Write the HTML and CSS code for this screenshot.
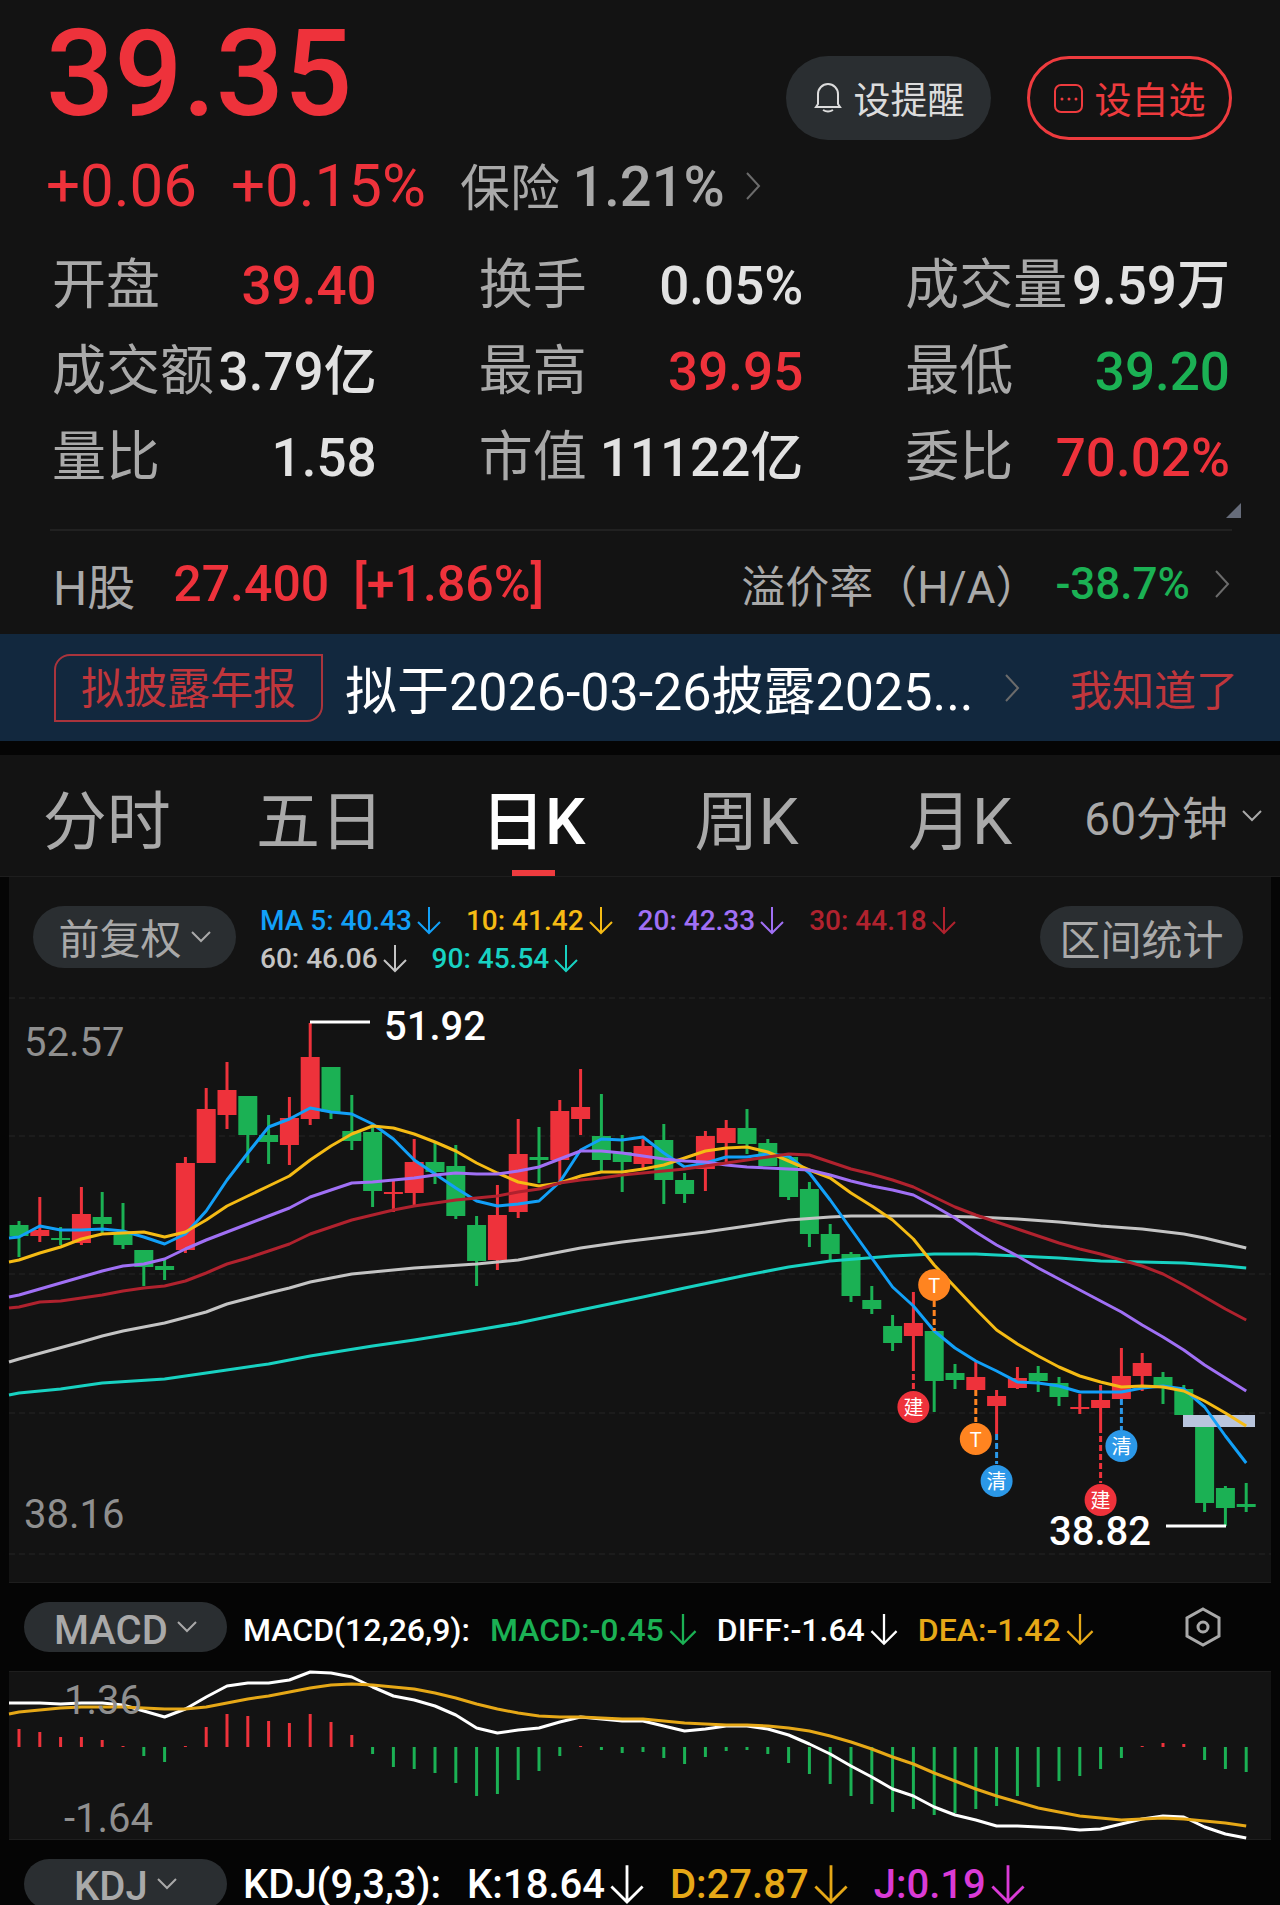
FILE: index.html
```html
<!DOCTYPE html>
<html lang="zh-CN">
<head>
    <meta charset="UTF-8">
    <meta name="viewport" content="width=device-width, initial-scale=1.0">
    <title>39.35</title>
    <link rel="stylesheet" href="styles.css">
</head>
<body>

    <!-- shared icons -->
    <svg class="sprite" aria-hidden="true">
        <symbol id="right" viewBox="0 0 16 30"><path d="M2 2l12 13L2 28"/></symbol>
        <symbol id="down" viewBox="0 0 20 12"><path d="M1 1l9 9 9-9"/></symbol>
        <symbol id="arrow" viewBox="0 0 24 28"><path d="M12 0v26M1 15l11 11 11-11"/></symbol>
    </svg>

    <header class="quote">
        <div class="quote-top">
            <div class="price">39.35</div>
            <div class="actions">
                <button type="button" class="action">
                    <svg class="action-icon" viewBox="0 0 30 32"><path d="M3 25h24l-2-3V12a10 10 0 0 0-20 0v10zM10 28q5 3 10 0"/></svg>
                    设提醒
                </button>
                <button type="button" class="action action-red">
                    <svg class="action-icon" viewBox="0 0 30 32"><rect x="1" y="3" width="27" height="27" rx="6"/><path class="dots" d="M8 17h0M15 17h0M22 17h0"/></svg>
                    设自选
                </button>
            </div>
        </div>

        <div class="change">
            <span class="red">+0.06</span>
            <span class="red">+0.15%</span>
            <a href="#" class="sector">保险 <b>1.21%</b></a>
            <svg class="chevron"><use href="#right"/></svg>
        </div>

        <dl class="stats">
            <div><dt>开盘</dt><dd class="red">39.40</dd></div>
            <div><dt>换手</dt><dd>0.05%</dd></div>
            <div><dt>成交量</dt><dd>9.59万</dd></div>
            <div><dt>成交额</dt><dd>3.79亿</dd></div>
            <div><dt>最高</dt><dd class="red">39.95</dd></div>
            <div><dt>最低</dt><dd class="green">39.20</dd></div>
            <div><dt>量比</dt><dd>1.58</dd></div>
            <div><dt>市值</dt><dd>11122亿</dd></div>
            <div><dt>委比</dt><dd class="red">70.02%</dd></div>
        </dl>
        <div class="corner"></div>

        <a href="#" class="hshare">
            <span>H股</span>
            <span class="red">27.400</span>
            <span class="red">[+1.86%]</span>
            <span class="premium">溢价率（H/A）</span>
            <span class="premium-value green">-38.7%</span>
            <svg class="chevron"><use href="#right"/></svg>
        </a>
    </header>

    <div class="notice">
        <span class="badge">拟披露年报</span>
        <a href="#" class="notice-text">拟于2026-03-26披露2025...</a>
        <svg class="chevron"><use href="#right"/></svg>
        <button type="button" class="dismiss">我知道了</button>
    </div>

    <nav class="tabs">
        <button type="button">分时</button>
        <button type="button">五日</button>
        <button type="button" class="active">日K</button>
        <button type="button">周K</button>
        <button type="button">月K</button>
        <label class="minutes">
            <select aria-label="60分钟"><option>60分钟</option></select>
            <svg class="caret"><use href="#down"/></svg>
        </label>
    </nav>

    <main class="charts">
        <section class="panel">
            <div class="ma-bar">
                <label class="pill">
                    <select aria-label="前复权"><option>前复权</option></select>
                    <svg class="caret"><use href="#down"/></svg>
                </label>
                <div class="ma-list">
                    <span class="ma5">MA 5: 40.43<svg><use href="#arrow"/></svg></span>
                    <span class="ma10">10: 41.42<svg><use href="#arrow"/></svg></span>
                    <span class="ma20">20: 42.33<svg><use href="#arrow"/></svg></span>
                    <span class="ma30">30: 44.18<svg><use href="#arrow"/></svg></span>
                    <span class="ma60">60: 46.06<svg><use href="#arrow"/></svg></span>
                    <span class="ma90">90: 45.54<svg><use href="#arrow"/></svg></span>
                </div>
                <button type="button" class="pill">区间统计</button>
            </div>
            <svg class="chart" id="kline" viewBox="0 0 1262 585"></svg>
        </section>

        <div class="indicator">
            <label class="pill">
                <select aria-label="MACD"><option>MACD</option></select>
                <svg class="caret"><use href="#down"/></svg>
            </label>
            <span>MACD(12,26,9):</span>
            <span class="green">MACD:-0.45<svg><use href="#arrow"/></svg></span>
            <span>DIFF:-1.64<svg><use href="#arrow"/></svg></span>
            <span class="gold">DEA:-1.42<svg><use href="#arrow"/></svg></span>
            <button type="button" class="settings" aria-label="MACD">
                <svg viewBox="0 0 36 40"><path d="M18 2l16 9v18l-16 9-16-9V11z"/><circle cx="18" cy="20" r="5"/></svg>
            </button>
        </div>

        <section class="panel">
            <svg class="chart" id="macd" viewBox="0 0 1262 167"></svg>
        </section>

        <div class="indicator kdj">
            <label class="pill">
                <select aria-label="KDJ"><option>KDJ</option></select>
                <svg class="caret"><use href="#down"/></svg>
            </label>
            <span>KDJ(9,3,3):</span>
            <span>K:18.64<svg><use href="#arrow"/></svg></span>
            <span class="gold">D:27.87<svg><use href="#arrow"/></svg></span>
            <span class="pink">J:0.19<svg><use href="#arrow"/></svg></span>
        </div>
    </main>

    <script src="chart.js"></script>
</body>
</html>
```
FILE: styles.css
```css
* {
    box-sizing: border-box;
}

body {
    margin: 0;
    background-color: #050505;
    color: #a9a9a9;
    font-family: Roboto, "Noto Sans CJK SC", sans-serif;
}

a {
    color: inherit;
    text-decoration: none;
}

button,
select {
    margin: 0;
    padding: 0;
    border: none;
    background: none;
    color: inherit;
    font: inherit;
    cursor: pointer;
}

select {
    padding-top: 6px;
    appearance: none;
}

svg {
    fill: none;
    stroke: currentColor;
    stroke-width: 2;
}

.sprite {
    display: none;
}

.red {
    color: #ee323b;
}

.green {
    color: #1bb154;
}

.gold {
    color: #e6a817;
}

.pink {
    color: #da3bd6;
}

.chevron {
    width: 16px;
    height: 30px;
    flex: none;
    color: #6b6b6b;
}

.caret {
    width: 20px;
    height: 12px;
    flex: none;
}

/* quote */
.quote {
    padding: 16px 48px 0 46px;
    background-color: #131313;
}

.quote-top {
    display: flex;
    justify-content: space-between;
    align-items: flex-end;
    height: 124px;
}

.price {
    align-self: flex-start;
    line-height: 116px;
    font-size: 120px;
    font-weight: 500;
    color: #ee323b;
}

.actions {
    display: flex;
    gap: 36px;
}

.action {
    display: flex;
    justify-content: center;
    align-items: center;
    gap: 11px;
    width: 205px;
    height: 84px;
    border-radius: 42px;
    background-color: #2a2e31;
    color: #dcdcdc;
    font-size: 37px;
}

.action-red {
    border: 3px solid #ee3b3e;
    background: none;
    color: #ee3b3e;
}

.action-icon {
    width: 30px;
    height: 32px;
}

.dots {
    stroke-width: 3;
    stroke-linecap: round;
}

.change {
    display: flex;
    align-items: center;
    gap: 34px;
    height: 60px;
    margin-top: 16px;
    line-height: 60px;
    font-size: 60px;
}

.sector {
    padding-top: 4px;
    font-size: 50px;
}

.sector b {
    font-size: 56px;
    font-weight: 500;
}

.change .chevron {
    margin-left: -14px;
}

.stats {
    display: grid;
    grid-template-columns: repeat(3, 1fr);
    column-gap: 102px;
    margin: 27px 2px 0 6px;
    line-height: 86px;
    font-size: 54px;
}

.stats div {
    display: flex;
    justify-content: space-between;
    height: 86px;
    white-space: nowrap;
}

.stats dd {
    margin: 0;
    font-size: 53px;
    font-weight: 500;
    color: #e2e2e2;
}

.stats dd.red {
    color: #ee323b;
}

.stats dd.green {
    color: #1bb154;
}

.corner {
    width: 15px;
    height: 15px;
    margin: 2px -9px 0 auto;
    background-color: #666c7a;
    clip-path: polygon(100% 0, 100% 100%, 0 100%);
}

.hshare {
    display: flex;
    align-items: center;
    height: 105px;
    margin: 11px 0 0 4px;
    padding: 2px 2px 0 3px;
    border-top: 2px solid #212121;
    gap: 38px;
    font-size: 48px;
    white-space: nowrap;
}

.hshare .red {
    font-size: 50px;
    font-weight: 500;
}

.hshare .red + .red {
    margin-left: -14px;
}

.hshare .premium {
    margin: 0 -22px 0 auto;
    font-size: 44px;
}

.hshare .premium-value {
    font-size: 44px;
    font-weight: 500;
}

.hshare .chevron {
    margin-left: -14px;
}

/* notice */
.notice {
    display: flex;
    align-items: center;
    height: 107px;
    padding: 0 42px 0 54px;
    background-color: #12283e;
    color: #c0363c;
    white-space: nowrap;
}

.badge {
    width: 269px;
    padding-top: 3px;
    border: 2px solid #a9343c;
    border-radius: 16px 0;
    line-height: 61px;
    font-size: 43px;
    text-align: center;
}

.notice-text {
    margin: 0 auto 0 22px;
    color: #fff;
    font-size: 52px;
}

.dismiss {
    margin-left: 50px;
    font-size: 42px;
}

/* period tabs */
.tabs {
    display: grid;
    grid-template-columns: repeat(6, 1fr);
    height: 122px;
    margin-top: 14px;
    border-bottom: 1px solid #1e1e1e;
    background-color: #131313;
    font-size: 64px;
}

.tabs .active {
    position: relative;
    color: #fff;
    font-weight: 500;
}

.tabs .active::after {
    content: "";
    position: absolute;
    left: 50%;
    bottom: 0;
    width: 43px;
    height: 6px;
    margin-left: -21px;
    background-color: #ee3b3e;
}

.minutes {
    display: flex;
    justify-content: center;
    align-items: center;
    gap: 14px;
    font-size: 46px;
}

/* charts */
.charts {
    padding: 0 9px;
}

.panel {
    border-bottom: 1px solid #1e1e1e;
    background-color: #131313;
}

.indicator + .panel {
    border-top: 1px solid #1e1e1e;
}

.chart {
    display: block;
    width: 100%;
    overflow: visible;
}

.pill {
    display: flex;
    justify-content: center;
    align-items: center;
    gap: 9px;
    flex: none;
    width: 203px;
    height: 62px;
    border-radius: 31px;
    background-color: #2a2e31;
    font-size: 41px;
}

.ma-bar {
    display: flex;
    align-items: flex-start;
    padding: 29px 28px 29px 24px;
}

.ma-list {
    display: flex;
    flex-wrap: wrap;
    column-gap: 25px;
    flex: 1;
    margin: -4px 60px -10px 24px;
    line-height: 38px;
    font-size: 28px;
    font-weight: 500;
}

.ma-list span,
.indicator span {
    display: flex;
    align-items: center;
    gap: 5px;
    white-space: nowrap;
}

.ma-list svg {
    width: 24px;
    height: 28px;
}

.ma5 { color: #12a0f8; }
.ma10 { color: #f5bb14; }
.ma20 { color: #a070f5; }
.ma30 { color: #b0222e; }
.ma60 { color: #c4c4c4; }
.ma90 { color: #18d2c2; }

.indicator {
    display: flex;
    align-items: center;
    gap: 20px;
    height: 88px;
    padding: 0 50px 0 15px;
    color: #fff;
    font-size: 32px;
    font-weight: 500;
}

.indicator > span {
    padding-top: 5px;
}

.indicator .pill {
    height: 50px;
    margin-right: -4px;
    border-radius: 25px;
    color: #a9a9a9;
    font-size: 40px;
}

.indicator span svg {
    width: 28px;
    height: 32px;
}

.settings {
    height: 40px;
    margin-left: auto;
    color: #a9a9a9;
}

.settings svg {
    width: 36px;
    height: 40px;
    stroke-width: 3;
}

.kdj {
    align-items: flex-start;
    gap: 26px;
    height: 65px;
    padding-top: 19px;
    overflow: hidden;
    line-height: 46px;
    font-size: 40px;
}

.kdj .pill {
    margin-right: -10px;
}

.kdj > span {
    padding-top: 3px;
}

.kdj span svg {
    width: 34px;
    height: 40px;
}

/* chart parts */
.chart text {
    fill: #8f8f8f;
    stroke: none;
    font-size: 40px;
}

.chart .peak {
    fill: #fff;
    font-weight: 500;
}

.grid {
    stroke: #1c1c1c;
    stroke-dasharray: 6 4;
}

.up {
    fill: #ee323b;
    stroke: #ee323b;
}

.fall {
    fill: #1bb154;
    stroke: #1bb154;
}

.bar,
.candle line {
    stroke-width: 3;
}

.candle rect,
.marker circle {
    stroke: none;
}

.line {
    stroke-width: 3;
    stroke-linejoin: round;
}

.leader {
    stroke: #fff;
    stroke-width: 3;
}

.gap {
    fill: #b9c5dd;
    stroke: none;
}

.marker line {
    stroke-width: 3;
    stroke-dasharray: 6 3;
}

.marker.jian { fill: #ee323b; stroke: #ee323b; }
.marker.t { fill: #ff8420; stroke: #ff8420; }
.marker.qing { fill: #2b98e8; stroke: #2b98e8; }

.chart .marker text {
    fill: #fff;
    font-size: 20px;
    text-anchor: middle;
}
```
FILE: chart.js
```js
const STEP = 20.8;
const FIRST = 10;

// [direction, high, top, bottom, low], measured down from the top of the chart
const candles = [
    ['g', 224, 228, 239, 260], ['r', 200, 233, 239, 245], ['g', 230, 241, 243, 248], ['r', 190, 217, 246, 248],
    ['g', 195, 220, 227, 237], ['g', 206, 236, 248, 252], ['g', 253, 253, 270, 289], ['g', 263, 269, 273, 283],
    ['r', 160, 166, 253, 256], ['r', 91, 112, 166, 166], ['r', 65, 93, 118, 132], ['g', 99, 99, 138, 166],
    ['g', 118, 138, 145, 167], ['r', 100, 121, 148, 168], ['r', 26, 60, 122, 128], ['g', 70, 70, 115, 122],
    ['g', 98, 134, 144, 153], ['g', 129, 135, 194, 210], ['r', 184, 195, 197, 215], ['r', 142, 165, 196, 209],
    ['g', 146, 165, 175, 187], ['g', 148, 169, 219, 222], ['g', 219, 228, 264, 289], ['r', 188, 218, 263, 273],
    ['r', 122, 157, 215, 221], ['g', 130, 160, 163, 186], ['r', 103, 114, 163, 185], ['r', 72, 110, 122, 138],
    ['g', 97, 139, 163, 175], ['g', 138, 155, 165, 195], ['r', 142, 149, 167, 171], ['g', 127, 143, 183, 207],
    ['g', 176, 183, 197, 206], ['r', 134, 139, 172, 194], ['r', 123, 131, 146, 166], ['g', 112, 131, 147, 157],
    ['g', 142, 146, 169, 169], ['g', 159, 160, 200, 203], ['g', 185, 192, 237, 250], ['g', 227, 237, 257, 264],
    ['g', 255, 257, 299, 305], ['g', 289, 303, 312, 317], ['g', 318, 329, 346, 354], ['r', 295, 326, 339, 368],
    ['g', 334, 334, 384, 415], ['g', 367, 376, 383, 392], ['r', 365, 380, 393, 393], ['r', 393, 399, 409, 437],
    ['r', 370, 381, 391, 392], ['g', 369, 376, 384, 395], ['g', 380, 386, 400, 409], ['r', 397, 410, 412, 417],
    ['r', 388, 403, 411, 430], ['r', 351, 379, 402, 402], ['r', 356, 366, 379, 394], ['g', 375, 380, 390, 407],
    ['g', 388, 392, 418, 418], ['g', 419, 429, 506, 515], ['g', 489, 491, 511, 529], ['g', 486, 507, 510, 515]
];

const ma5 = [240, 229, 233, 233, 232, 234, 240, 247, 237, 214, 183, 156, 130, 122, 111, 115, 117, 127, 142, 163,
    177, 191, 204, 209, 207, 204, 185, 153, 142, 143, 140, 156, 170, 166, 160, 160, 157, 159, 176, 203,
    232, 261, 290, 309, 334, 351, 364, 374, 385, 386, 389, 395, 395, 395, 391, 389, 392, 410, 439, 466];
const ma10 = [263, 256, 250, 242, 237, 236, 235, 240, 235, 223, 209, 199, 189, 179, 163, 149, 137, 129, 131, 137,
    145, 154, 166, 176, 185, 189, 186, 179, 175, 175, 172, 168, 161, 154, 151, 150, 155, 164, 173, 181,
    196, 209, 223, 242, 268, 290, 312, 333, 347, 359, 370, 379, 385, 390, 389, 390, 394, 404, 416, 429];
const ma20 = [298, 292, 286, 280, 274, 269, 267, 262, 252, 243, 235, 227, 219, 211, 200, 193, 186, 185, 183, 181,
    178, 176, 177, 177, 174, 170, 162, 154, 154, 156, 159, 162, 164, 165, 168, 170, 171, 172, 173, 178,
    184, 189, 193, 198, 209, 221, 235, 248, 259, 271, 282, 293, 304, 315, 328, 340, 353, 368, 381, 394];
const ma30 = [310, 305, 304, 301, 298, 294, 291, 289, 284, 276, 267, 261, 254, 247, 237, 230, 223, 218, 213, 209,
    206, 203, 201, 199, 195, 192, 186, 183, 181, 178, 176, 174, 172, 169, 166, 163, 160, 157, 158, 165,
    172, 177, 183, 190, 200, 210, 218, 225, 232, 239, 246, 252, 257, 263, 269, 277, 288, 300, 312, 323];

// the slow averages are given as [candle, y] points
const ma60 = [[0, 362], [3, 345], [4, 339], [5, 334], [7, 326], [9, 315], [10, 307], [12, 296], [13, 291],
    [14, 285], [15, 281], [16, 277], [17, 275], [19, 271], [22, 267], [23, 265], [24, 263], [25, 259], [27, 251],
    [29, 245], [31, 240], [33, 235], [35, 229], [37, 223], [39, 220], [40, 219], [44, 219], [46, 220], [48, 222],
    [50, 225], [52, 229], [54, 232], [56, 237], [57, 241], [58, 246], [59, 251]];
const ma90 = [[0, 396], [2, 392], [4, 386], [7, 382], [9, 376], [12, 367], [14, 359], [17, 349], [19, 343],
    [22, 333], [24, 326], [27, 313], [30, 300], [32, 291], [35, 278], [37, 270], [39, 264], [42, 259], [44, 257],
    [46, 257], [48, 259], [50, 261], [52, 264], [54, 265], [56, 266], [58, 269], [59, 271]];

// [candle, label, class, centre y, line from, line to]
const markers = [
    [43, '建', 'jian', 410, 368, 394],
    [44, 'T', 't', 288, 304, 334],
    [46, 'T', 't', 442, 393, 425],
    [47, '清', 'qing', 484, 437, 467],
    [52, '建', 'jian', 503, 430, 486],
    [53, '清', 'qing', 449, 402, 433]
];

const ZERO = 75;
const bars = [57, 60, 65, 65, 68, 74, 84, 90, 74, 55, 42, 44, 49, 51, 42, 50, 63, 82, 95, 97,
    101, 111, 124, 122, 108, 99, 84, 74, 78, 81, 80, 86, 92, 85, 79, 78, 82, 91, 102, 112,
    124, 132, 140, 137, 143, 141, 137, 134, 124, 115, 109, 104, 97, 86, 74, 71, 72, 88, 97, 100];
const diff = [31, 31, 32, 31, 31, 33, 39, 45, 37, 25, 14, 11, 11, 8, 0, 1, 5, 15, 24, 28,
    34, 43, 56, 61, 58, 56, 50, 45, 47, 49, 49, 54, 59, 57, 54, 54, 57, 63, 72, 82,
    94, 105, 117, 124, 135, 143, 148, 154, 154, 155, 156, 158, 157, 152, 147, 144, 145, 155, 162, 166];
const dea = [40, 38, 36, 35, 35, 35, 36, 37, 37, 35, 31, 27, 24, 20, 16, 13, 12, 13, 15, 17,
    21, 26, 32, 37, 41, 44, 45, 45, 46, 47, 47, 49, 51, 52, 53, 53, 54, 56, 59, 64,
    70, 77, 85, 92, 101, 109, 117, 124, 130, 136, 140, 144, 146, 148, 147, 146, 147, 149, 151, 154];

function x(i) {
    return FIRST + i * STEP;
}

function line(name, values, start) {
    const points = values.map((v, i) => Array.isArray(v) ? x(v[0]) + ',' + v[1] : x(i) + ',' + v);
    return `<polyline class="line ${name}" stroke="currentColor" points="0,${start} ${points.join(' ')}"/>`;
}

function drawKline() {
    let out = '';
    for (const y of [1, 139, 277, 416, 557]) {
        out += `<line class="grid" x1="0" y1="${y}" x2="1262" y2="${y}"/>`;
    }
    candles.forEach(([dir, high, top, bottom, low], i) => {
        out += `<g class="candle ${dir === 'r' ? 'up' : 'fall'}">
            <line x1="${x(i)}" y1="${high}" x2="${x(i)}" y2="${low}"/>
            <rect x="${x(i) - 9.5}" y="${top}" width="19" height="${bottom - top}"/></g>`;
    });
    out += '<rect class="gap" x="1174" y="418" width="72" height="12"/>';
    out += line('ma60', ma60, 365) + line('ma90', ma90, 398) + line('ma5', ma5, 241);
    out += line('ma10', ma10, 265) + line('ma20', ma20, 300) + line('ma30', ma30, 311);
    for (const [i, label, name, cy, from, to] of markers) {
        out += `<g class="marker ${name}"><line x1="${x(i)}" y1="${from}" x2="${x(i)}" y2="${to}"/>
            <circle cx="${x(i)}" cy="${cy}" r="16"/><text x="${x(i)}" y="${cy + 8}">${label}</text></g>`;
    }
    out += '<line class="leader" x1="301" y1="25" x2="361" y2="25"/><text class="peak" x="375" y="43">51.92</text>';
    out += '<line class="leader" x1="1157" y1="529" x2="1217" y2="529"/><text class="peak" x="1040" y="548">38.82</text>';
    out += '<text x="15" y="59">52.57</text><text x="15" y="531">38.16</text>';
    document.getElementById('kline').innerHTML = out;
}

function drawMacd() {
    let out = '';
    bars.forEach((y, i) => {
        out += `<line class="bar ${y < ZERO ? 'up' : 'fall'}" x1="${x(i)}" y1="${ZERO}" x2="${x(i)}" y2="${y}"/>`;
    });
    out += '<g color="#fff">' + line('diff', diff, 31) + '</g>';
    out += '<g color="#e6a817">' + line('dea', dea, 42) + '</g>';
    out += '<text x="55" y="42">1.36</text><text x="55" y="160">-1.64</text>';
    document.getElementById('macd').innerHTML = out;
}

drawKline();
drawMacd();
```
